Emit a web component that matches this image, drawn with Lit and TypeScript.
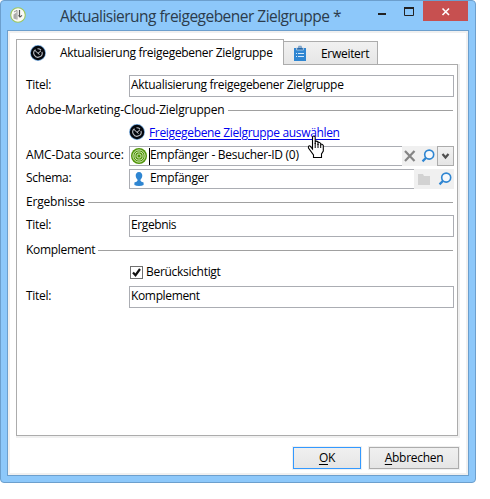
import { LitElement, html, css, svg } from "lit";
import { customElement } from "lit/decorators.js";

const dial = html`<svg class="ic" width="16" height="16" viewBox="0 0 16 16"><circle cx="8" cy="8" r="7.9" fill="#6fa3d6"/><circle cx="8" cy="8" r="7.2" fill="#04070d"/><path d="M5.500 4.600A4.200 4.200 0 1 0 12 6.800M7.500 3.800Q9.500 3.600 11 5" fill="none" stroke="#b9bdc4" stroke-width="1.100"/><path d="M5 5.500L8 8.300L11 5.800M8 8.300L9.500 9.500" fill="none" stroke="#d4d7dc" stroke-width="1"/></svg>`;
const lens = html`<svg class="ic" width="14" height="14" viewBox="0 0 14 14"><circle cx="8.2" cy="5.600" r="4.500" fill="#f6f9fc" stroke="#2f86d2" stroke-width="1.600"/><path d="M5 8.900L1.500 12.400" stroke="#2f86d2" stroke-width="2.200"/></svg>`;
const rings = html`<svg class="ic" width="16" height="16" viewBox="0 0 16 16"><circle cx="8" cy="8" r="8" fill="#4f9408"/>${[6.1, 4.1, 2.1].map(
  (r) => svg`<circle cx="8" cy="8" r=${r} fill="none" stroke="#d9ecc0" stroke-width=".95"/>`
)}</svg>`;
const person = html`<svg class="ic" width="12" height="15" viewBox="0 0 12 15"><path d="M6 0C8.300 0 9.300 1.800 9.300 3.800C9.300 5.800 8 7 7.500 7.800V8.800Q8 9.800 10.600 10.500V13Q9 14 6 14T1.400 13V10.500Q4 9.800 4.500 8.800V7.800C4 7 2.700 5.800 2.700 3.800C2.700 1.800 3.700 0 6 0Z" fill="#2f86d2"/></svg>`;
const clipboard = html`<svg class="ic" width="12" height="16" viewBox="0 0 12 16"><path d="M0 3H12V16H0Z" fill="#2f86d2"/><path d="M2.500 5V2.800H4.200V1.600Q4.200.4 6 .4T7.800 1.600V2.800H9.500V5Z" fill="#2465a5" stroke="#fff" stroke-width=".5"/><rect x="5.300" y="1.400" width="1.400" height="1.300" fill="#fff"/><path d="M2 8.500H3M4 8.500H10M2 11.500H3M4 11.500H10" stroke="#d5e8f8"/></svg>`;
const appLogo = html`<svg class="ic" width="16" height="16" viewBox="0 0 16 16"><circle cx="8" cy="8" r="7.300" fill="#fafaf5" stroke="#9cc65a" stroke-width="1.100"/><path d="M3.500 7.500L6.500 5.500V12.500L3.500 11.500Z" fill="#aaa"/><path d="M4 5L7 3.300V12.500" fill="none" stroke="#999" stroke-width="1"/><path d="M9.500 3V9" fill="none" stroke="#555" stroke-width="1.200"/><path d="M8.500 8.300L10 10L12 8.300" fill="none" stroke="#555" stroke-width="1.100"/></svg>`;

@customElement("app-root")
export class AppRoot extends LitElement {
  static styles = css`
    :host { display: block; width: 490px; height: 499px; background: #fff; overflow: hidden; }
    * { box-sizing: border-box; }
    .window { position: relative; width: 476px; height: 483px; background: #8dc8fa; border: 1px solid #6c9fcd; border-radius: 4px; padding: 0 6px 6px;
      display: flex; flex-direction: column; font: 12px/16px "Open Sans", "Noto Sans", sans-serif; font-stretch: 92%; color: #000; }
    .ic { display: block; flex: none; }
    .titlebar { height: 29px; display: flex; align-items: flex-start; flex: none; }
    .logo { margin: 6px 0 0 3px; }
    .caption { margin: 3px 0 0 34px; font-size: 15.5px; line-height: 24px; color: #2c3c4c; width: 314px; flex: none; white-space: nowrap; letter-spacing: -.52px; }
    .controls { display: block; flex: none; margin-left: 1px; width: 93px; height: 20px; }
    .client { flex: 1; background: #fff; border: 1px solid #6c9fcd; box-shadow: inset 0 0 0 2px #f0f0f0; padding: 8px 9px 6px 8px; display: flex; flex-direction: column; }
    .tabs { display: flex; align-items: flex-end; height: 25px; }
    .tab { display: flex; align-items: center; white-space: nowrap; border: 1px solid #acacac; }
    .tab.on { width: 268px; height: 26px; margin-bottom: -1px; background: #fff; border-bottom: 0; padding: 0 0 0 13px; gap: 14px; position: relative; }
    .tab.off { width: 94px; height: 23px; border-left: 0; border-bottom: 0; background: linear-gradient(#f1f1f1, #e6e6e6); padding-left: 10px; gap: 15px; }
    .tab .t { padding-top: 1px; }
    .panel { height: 372px; width: 442px; border: 1px solid #acacac; box-shadow: 1px 1px 0 1px #f0f0f0; padding: 10px 3px 0 9px; background: #fff; }
    .row { display: flex; align-items: center; }
    .row > label { width: 103px; flex: none; white-space: nowrap; padding-bottom: 2px; }
    .t { white-space: nowrap; letter-spacing: var(--ls, -.3px); }
    .field { flex: 1; height: 22px; border: 1px solid #abadb3; padding: 0 0 0 1px; display: flex; align-items: center; background: #fff; }
    .field .t { padding-bottom: 2px; }
    .section { display: flex; align-items: center; gap: 3px; height: 16px; }
    .section::after { content: ""; flex: 1; height: 1px; background: #a0a0a0; margin: 1px 1px 0 0; }
    .pick { height: 20px; border-right: 0; padding: 0 0 0 1px; }
    .tools { display: flex; height: 20px; background: #f0f0f0; align-items: center; }
    .drop { width: 17px; height: 20px; border: 1px solid #acacac; background: linear-gradient(#f2f2f2, #e5e5e5); }
    .link { color: #0000f0; text-decoration: underline; text-underline-offset: 2px; margin: 1px 0 0 4px; }
    .caret { width: 1px; height: 17px; background: #000; margin-left: 2px; }
    .check { width: 13px; height: 13px; border: 1px solid #707070; }
    .buttons { display: flex; justify-content: flex-end; gap: 8px; margin-top: 11px; }
    .btn { height: 22px; border: 1px solid #acacac; background: linear-gradient(#f0f0f0, #e5e5e5); box-shadow: 0 0 0 1px #f0f0f0; text-align: center; line-height: 20px; }
    .btn.def { border-color: #3399ff; }
    .hand { position: absolute; left: 306px; top: 134px; }
    u { text-underline-offset: 2px; }
  `;

  text(s: unknown, ls = -0.3) {
    return html`<span class="t" style="--ls:${ls}px">${s}</span>`;
  }

  render() {
    return html`<div class="window">
      <div class="titlebar">
        <div class="logo">${appLogo}</div>
        <div class="caption">Aktualisierung freigegebener Zielgruppe *</div>
        <svg class="controls" width="93" height="20" viewBox="0 0 93 20"><path d="M3 13H11" stroke="#222" stroke-width="2"/><path d="M29.500 7V14.500H38.500V7" fill="none" stroke="#222"/><path d="M29 7H39" stroke="#222" stroke-width="2"/><path d="M48 0H93V20H48Z" fill="#c75050"/><path d="M67.500 7.500L74 14M74 7.500L67.500 14" stroke="#fff" stroke-width="1.600"/></svg>
      </div>
      <div class="client">
        <div class="tabs">
          <div class="tab on">${dial}${this.text("Aktualisierung freigegebener Zielgruppe")}</div>
          <div class="tab off">${clipboard}${this.text("Erweitert")}</div>
        </div>
        <div class="panel">
          <div class="row"><label>${this.text("Titel:")}</label><div class="field">${this.text("Aktualisierung freigegebener Zielgruppe")}</div></div>
          <div class="section" style="margin-top:5px">${this.text("Adobe-Marketing-Cloud-Zielgruppen", -0.17)}</div>
          <div class="row" style="height:28px"><label></label>${dial}<span class="link">${this.text("Freigegebene Zielgruppe auswählen", -0.34)}</span></div>
          <div class="row"><label>${this.text("AMC-Data source:", -0.15)}</label>
            <div class="field pick">${rings}<span class="caret"></span>${this.text("Empfänger - Besucher-ID (0)")}</div>
            <div class="tools" style="width:35px;padding-left:2px;gap:5px"><svg class="ic" width="12" height="12" viewBox="0 0 12 12"><path d="M1 1L10.500 11M10.500 1L1 11" stroke="#858585" stroke-width="2.200"/></svg>${lens}</div>
            <div class="drop"><svg class="ic" width="15" height="18" viewBox="0 0 15 18"><path d="M4.500 7L7.500 10.500L10.500 7" fill="none" stroke="#505050" stroke-width="2.200"/></svg></div>
          </div>
          <div class="row" style="margin-top:3px"><label>${this.text("Schema:")}</label>
            <div class="field pick" style="padding-left:3px;gap:5px">${person}${this.text("Empfänger")}</div>
            <div class="tools" style="width:40px;padding-left:4px;gap:8px"><svg class="ic" width="12" height="12" viewBox="0 0 12 12"><path d="M0 1H5L6 3H12V12H0Z" fill="#d2d2d2"/></svg>${lens}</div>
          </div>
          <div class="section" style="margin-top:5px">${this.text("Ergebnisse", -0.2)}</div>
          <div class="row" style="margin-top:5px"><label>${this.text("Titel:")}</label><div class="field">${this.text("Ergebnis", -0.4)}</div></div>
          <div class="section" style="margin-top:5px">${this.text("Komplement")}</div>
          <div class="row" style="height:28px"><label></label><svg class="ic check" style="margin:0 3px 0 1px" viewBox="0 0 11 11"><path d="M2 5.500L4.500 8.200L9 2" fill="none" stroke="#111" stroke-width="2.200"/></svg>${this.text("Berücksichtigt")}</div>
          <div class="row"><label>${this.text("Titel:")}</label><div class="field">${this.text("Komplement", -0.35)}</div></div>
        </div>
        <div class="buttons">
          <div class="btn def" style="width:68px">${this.text(html`<u>O</u>K`)}</div>
          <div class="btn" style="width:90px">${this.text(html`<u>A</u>bbrechen`)}</div>
        </div>
      </div>
      <svg class="hand" width="18" height="24" viewBox="0 0 18 24"><path d="M5.500 14V2.500Q5.500 1 6.800 1T8.200 2.500V9V6.500Q9.500 5.500 11 7V10V7.500Q12.500 6.700 13.700 8.500V10.500V9Q15.500 8.800 16.300 10.500V16L14.500 19V22.500H6.500V20L1.500 13Q1 10.500 3 11Z" fill="#fff" stroke="#000" stroke-width="1.100"/><path d="M8.200 8V13M11 9V13M13.700 10V13" stroke="#000"/></svg>
    </div>`;
  }
}
